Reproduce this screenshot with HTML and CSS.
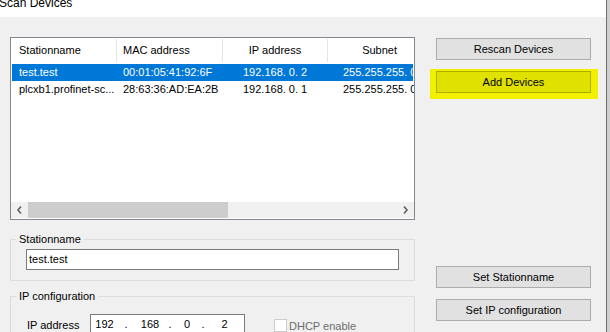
FILE: index.html
```html
<!DOCTYPE html>
<html>
<head>
<meta charset="utf-8">
<link rel="stylesheet" href="styles.css">
</head>
<body>
<div class="window">
  <div class="content">
    <div class="titlebar"><span class="title">Scan Devices</span></div>
    <div class="main">
      <div class="left">
        <div class="list">
          <div class="list-body">
            <div class="row header">
              <div class="cell c1">Stationname</div>
              <div class="cell c2">MAC address</div>
              <div class="cell c3">IP address</div>
              <div class="cell c4">Subnet</div>
            </div>
            <div class="row item selected">
              <div class="cell c1">test.test</div>
              <div class="cell c2">00:01:05:41:92:6F</div>
              <div class="cell c3">192.168. 0. 2</div>
              <div class="cell c4">255.255.255. 0</div>
            </div>
            <div class="row item">
              <div class="cell c1">plcxb1.profinet-sc...</div>
              <div class="cell c2">28:63:36:AD:EA:2B</div>
              <div class="cell c3">192.168. 0. 1</div>
              <div class="cell c4">255.255.255. 0</div>
            </div>
          </div>
          <div class="hscroll">
            <div class="arrow">
              <svg width="17" height="16" viewBox="0 0 17 16"><path d="M10 4.5 L7 8 L10 11.5" fill="none" stroke="#606060" stroke-width="1.6"/></svg>
            </div>
            <div class="thumb"></div>
            <div class="track"></div>
            <div class="arrow">
              <svg width="17" height="16" viewBox="0 0 17 16"><path d="M7 4.5 L10 8 L7 11.5" fill="none" stroke="#606060" stroke-width="1.6"/></svg>
            </div>
          </div>
        </div>

        <fieldset class="group g1">
          <legend>Stationname</legend>
          <div class="textbox">test.test</div>
        </fieldset>

        <fieldset class="group g2">
          <legend>IP configuration</legend>
          <div class="iprow">
            <span class="iplabel">IP address</span>
            <div class="ipbox">
              <span class="n n1">192</span><span class="d d1">.</span><span class="n n2">168</span><span class="d d2">.</span><span class="n n3">0</span><span class="d d3">.</span><span class="n n4">2</span>
            </div>
            <span class="check"></span>
            <span class="checklabel">DHCP enable</span>
          </div>
        </fieldset>
      </div>

      <div class="right">
        <div class="btn">Rescan Devices</div>
        <div class="highlight"><div class="btn hl">Add Devices</div></div>
        <div class="btn b3">Set Stationname</div>
        <div class="btn b4">Set IP configuration</div>
      </div>
    </div>
  </div>
  <div class="edge"></div>
</div>
</body>
</html>
```

FILE: styles.css
```css
html, body {
  margin: 0;
  padding: 0;
  width: 610px;
  height: 332px;
  overflow: hidden;
  background: #f0f0f0;
}
body {
  font-family: "Liberation Sans", Arial, sans-serif;
  font-size: 11px;
  color: #000;
}
.window {
  display: flex;
  width: 610px;
  height: 332px;
}
.content {
  width: 606px;
  display: flex;
  flex-direction: column;
  overflow: hidden;
}
.edge {
  width: 3px;
  border-left: 1px solid #6e6e6e;
  background: #cfcfcf;
}
.titlebar {
  flex-shrink: 0;
  height: 17px;
  background: #fff;
  overflow: hidden;
}
.title {
  display: block;
  font-size: 12px;
  line-height: 12px;
  margin-top: -3px;
  margin-left: -1px;
  color: #000;
}
.main {
  flex-shrink: 0;
  display: flex;
  padding-left: 10px;
}
.left {
  width: 405px;
  display: flex;
  flex-direction: column;
  flex-shrink: 0;
}
.list {
  flex-shrink: 0;
  margin-top: 20px;
  height: 183px;
  box-sizing: border-box;
  border: 1px solid #828790;
  background: #fff;
  display: flex;
  flex-direction: column;
  overflow: hidden;
}
.list-body {
  flex: 1;
  overflow: hidden;
}
.row {
  display: grid;
  grid-template-columns: 106px 106px 105px 100px;
  white-space: nowrap;
}
.cell {
  overflow: hidden;
  box-sizing: border-box;
}
.header {
  height: 26px;
  line-height: 23px;
}
.header .cell {
  height: 23px;
  margin-top: 1px;
}
.header .c1, .header .c2, .header .c3 {
  border-right: 1px solid #e5e5e5;
}
.header .c1 { padding-left: 8px; }
.header .c2 { padding-left: 6px; }
.header .c3 { text-align: center; }
.header .c4 { text-align: right; padding-right: 31px; }
.item {
  height: 17px;
  line-height: 17px;
}
.item .c1 { padding-left: 8px; }
.item .c2 { padding-left: 6px; }
.item .c3 { padding-left: 20px; }
.item .c4 { padding-left: 15px; }
.selected {
  background: #0078d7;
  color: #fff;
  margin: 0 1px 0 1px;
  grid-template-columns: 105px 106px 105px 100px;
}
.selected .c1 { padding-left: 7px; }
.hscroll {
  flex-shrink: 0;
  height: 16px;
  margin-bottom: 1px;
  display: flex;
  background: #f0f0f0;
}
.arrow {
  width: 17px;
  height: 16px;
}
.arrow svg { display: block; }
.thumb {
  width: 200px;
  background: #cdcdcd;
}
.track { flex: 1; }

.group {
  flex-shrink: 0;
  margin: 0;
  padding: 0;
  min-width: 0;
  border: 1px solid #dcdcdc;
}
.group legend {
  margin-left: 5px;
  padding: 0 3px;
  line-height: 12px;
  font-size: 11px;
}
.g1 {
  margin-top: 13px;
  padding: 4px 0 10px 0;
}
.textbox {
  margin-left: 15px;
  width: 373px;
  height: 21px;
  box-sizing: border-box;
  border: 1px solid #7a7a7a;
  background: #fff;
  line-height: 19px;
  padding-left: 2px;
}
.g2 {
  margin-top: 9px;
  padding: 12px 0 20px 0;
}
.iprow {
  display: flex;
  align-items: flex-start;
  height: 21px;
}
.iplabel {
  margin-left: 16px;
  width: 63px;
  line-height: 21px;
  padding-top: 1px;
}
.ipbox {
  width: 155px;
  height: 21px;
  box-sizing: border-box;
  border: 1px solid #7a7a7a;
  background: #fff;
  display: flex;
  line-height: 19px;
}
.ipbox span { text-align: center; display: block; }
.n1 { width: 27px; }
.d1 { width: 16px; }
.n2 { width: 32px; }
.d2 { width: 8px; }
.n3 { width: 26px; }
.d3 { width: 6px; }
.n4 { width: 37px; }
.check {
  margin-left: 29px;
  margin-top: 5px;
  width: 13px;
  height: 13px;
  box-sizing: border-box;
  border: 1px solid #cccccc;
  background: #fff;
}
.checklabel {
  margin-left: 2px;
  color: #6d6d6d;
  line-height: 21px;
  padding-top: 2px;
}

.right {
  margin-left: 21px;
  width: 155px;
  display: flex;
  flex-direction: column;
}
.btn {
  flex-shrink: 0;
  width: 155px;
  height: 22px;
  box-sizing: border-box;
  border: 1px solid #adadad;
  background: #e1e1e1;
  text-align: center;
  line-height: 20px;
}
.right > .btn:first-child { margin-top: 21px; }
.highlight {
  flex-shrink: 0;
  margin-top: 9px;
  margin-left: -6px;
  width: 168px;
  padding: 2px 0 6px 6px;
  box-sizing: border-box;
  background: #f0f000;
}
.btn.hl {
  background: #e1e100;
  border-color: #adad00;
}
.b3 { margin-top: 167px; }
.b4 { margin-top: 11px; }
```
